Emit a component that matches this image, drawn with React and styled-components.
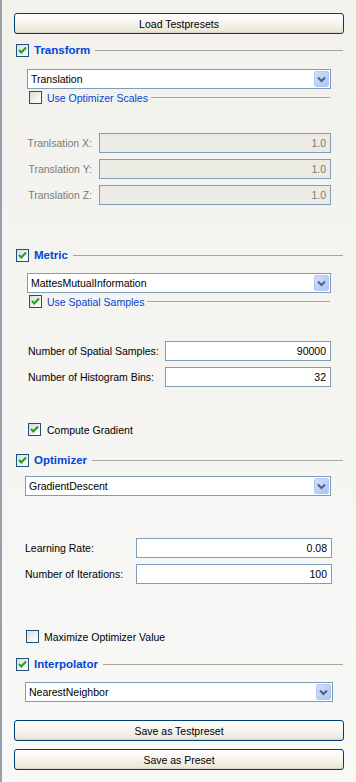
import React from "react";
import styled, { createGlobalStyle } from "styled-components";

const GlobalStyle = createGlobalStyle`
  html, body {
    margin: 0;
    padding: 0;
    background: #f8f8f7;
  }
  * {
    box-sizing: border-box;
  }
`;

const FONT = `"Liberation Sans", Tahoma, Arial, sans-serif`;

const Page = styled.div`
  width: 356px;
  height: 782px;
  display: flex;
  flex-direction: column;
  font-family: ${FONT};
  font-size: 10.5px;
  color: #000;
  background: linear-gradient(#f2f1ec, #f8f8f7);
  box-shadow: inset 2px 0 0 #96a0a8;
  overflow: hidden;
`;

const PushButton = styled.button`
  margin: ${(p) => p.$mt}px 0 0 14px;
  width: 330px;
  height: 21px;
  padding: 0;
  border: 1px solid #003c74;
  border-radius: 3px;
  background: linear-gradient(#ffffff 0%, #f6f5f0 45%, #ece9d8 90%, #d6d0c5 100%);
  font-family: ${FONT};
  font-size: 10.5px;
  color: #000;
  flex: none;
`;

const GroupHeader = styled.div`
  display: flex;
  align-items: center;
  height: 14px;
  margin-top: ${(p) => p.$mt}px;
  padding: 0 13px 0 16px;
  flex: none;
`;

const Title = styled.span`
  margin-left: 5px;
  font-weight: bold;
  font-size: 11.5px;
  color: #0046d5;
  white-space: nowrap;
`;

const Rule = styled.div`
  flex: 1;
  height: 1px;
  margin-left: ${(p) => p.$gap || 5}px;
  background: #a9a799;
`;

const BoxFrame = styled.span`
  width: 13px;
  height: 13px;
  flex: none;
  display: flex;
  align-items: center;
  justify-content: center;
  border: 1px solid #1c5180;
  background: linear-gradient(135deg, #dcdcd6 0%, #f3f3ef 60%, #ffffff 100%);
`;

const Check = ({ on }) => (
  <BoxFrame>
    {on && (
      <svg width="11" height="11" viewBox="0 0 11 11">
        <path d="M2 5 L4.3 7.5 L9 2.5" fill="none" stroke="#21a121" strokeWidth="2.1" />
      </svg>
    )}
  </BoxFrame>
);

const CheckRow = styled.div`
  display: flex;
  align-items: center;
  height: 13px;
  margin: ${(p) => p.$mt}px 26px 0 ${(p) => p.$ml}px;
  flex: none;
`;

const CheckLabel = styled.span`
  margin-left: ${(p) => p.$gap}px;
  color: ${(p) => (p.$blue ? "#0046d5" : "#000")};
  white-space: nowrap;
`;

const Combo = styled.div`
  display: flex;
  align-items: center;
  height: 20px;
  width: ${(p) => p.$w}px;
  margin: ${(p) => p.$mt}px 0 0 ${(p) => p.$ml}px;
  padding: 0 1px 0 3px;
  border: 1px solid #7f9db9;
  background: #fff;
  flex: none;
`;

const ComboText = styled.span`
  flex: 1;
  white-space: nowrap;
`;

const ArrowButton = styled.span`
  width: 15px;
  height: 16px;
  display: flex;
  align-items: center;
  justify-content: center;
  border: 1px solid #b4c8f6;
  border-radius: 2px;
  background: linear-gradient(135deg, #d2defb 0%, #c0d1f8 50%, #b0c4f4 100%);
`;

const ComboBox = ({ text, w, mt, ml }) => (
  <Combo $w={w} $mt={mt} $ml={ml}>
    <ComboText>{text}</ComboText>
    <ArrowButton>
      <svg width="9" height="7" viewBox="0 0 9 7">
        <path d="M1 1.5 L4.5 5 L8 1.5" fill="none" stroke="#4d6185" strokeWidth="2" />
      </svg>
    </ArrowButton>
  </Combo>
);

const FieldRow = styled.div`
  display: flex;
  align-items: center;
  height: 20px;
  margin: ${(p) => p.$mt}px 0 0 ${(p) => p.$ml}px;
  flex: none;
`;

const FieldLabel = styled.span`
  width: ${(p) => p.$w}px;
  text-align: ${(p) => (p.$right ? "right" : "left")};
  color: ${(p) => (p.$disabled ? "#7b7b73" : "#000")};
  white-space: nowrap;
`;

const Field = styled.div`
  width: ${(p) => p.$w}px;
  height: 20px;
  display: flex;
  align-items: center;
  justify-content: flex-end;
  padding-right: 4px;
  border: 1px solid #7f9db9;
  background: ${(p) => (p.$disabled ? "#ebeae3" : "#fff")};
  color: ${(p) => (p.$disabled ? "#7b7b73" : "#000")};
`;

const translations = ["Tranlsation X:", "Translation Y:", "Translation Z:"];

export default function App() {
  return (
    <Page>
      <GlobalStyle />
      <PushButton $mt={13}>Load Testpresets</PushButton>

      <GroupHeader $mt={9}>
        <Check on />
        <Title>Transform</Title>
        <Rule />
      </GroupHeader>
      <ComboBox text="Translation" w={304} mt={12} ml={27} />
      <CheckRow $mt={2} $ml={29}>
        <Check />
        <CheckLabel $gap={5} $blue>Use Optimizer Scales</CheckLabel>
        <Rule $gap={3} />
      </CheckRow>
      {translations.map((label, i) => (
        <FieldRow key={label} $mt={i === 0 ? 29 : 6} $ml={20}>
          <FieldLabel $w={72} $right $disabled>
            {label}
          </FieldLabel>
          <Field $w={232} $disabled style={{ marginLeft: 7 }}>
            1.0
          </Field>
        </FieldRow>
      ))}

      <GroupHeader $mt={43}>
        <Check on />
        <Title>Metric</Title>
        <Rule />
      </GroupHeader>
      <ComboBox text="MattesMutualInformation" w={304} mt={11} ml={27} />
      <CheckRow $mt={2} $ml={29}>
        <Check on />
        <CheckLabel $gap={5} $blue>Use Spatial Samples</CheckLabel>
        <Rule $gap={3} />
      </CheckRow>
      <FieldRow $mt={33} $ml={28}>
        <FieldLabel $w={137}>Number of Spatial Samples:</FieldLabel>
        <Field $w={166}>90000</Field>
      </FieldRow>
      <FieldRow $mt={6} $ml={28}>
        <FieldLabel $w={137}>Number of Histogram Bins:</FieldLabel>
        <Field $w={166}>32</Field>
      </FieldRow>
      <CheckRow $mt={36} $ml={28}>
        <Check on />
        <CheckLabel $gap={6}>Compute Gradient</CheckLabel>
      </CheckRow>

      <GroupHeader $mt={17}>
        <Check on />
        <Title>Optimizer</Title>
        <Rule />
      </GroupHeader>
      <ComboBox text="GradientDescent" w={306} mt={9} ml={25} />
      <FieldRow $mt={42} $ml={25}>
        <FieldLabel $w={111}>Learning Rate:</FieldLabel>
        <Field $w={196}>0.08</Field>
      </FieldRow>
      <FieldRow $mt={6} $ml={25}>
        <FieldLabel $w={111}>Number of Iterations:</FieldLabel>
        <Field $w={196}>100</Field>
      </FieldRow>
      <CheckRow $mt={46} $ml={26}>
        <Check />
        <CheckLabel $gap={5}>Maximize Optimizer Value</CheckLabel>
      </CheckRow>

      <GroupHeader $mt={14}>
        <Check on />
        <Title>Interpolator</Title>
        <Rule />
      </GroupHeader>
      <ComboBox text="NearestNeighbor" w={308} mt={11} ml={25} />

      <PushButton $mt={18}>Save as Testpreset</PushButton>
      <PushButton $mt={8}>Save as Preset</PushButton>
    </Page>
  );
}
